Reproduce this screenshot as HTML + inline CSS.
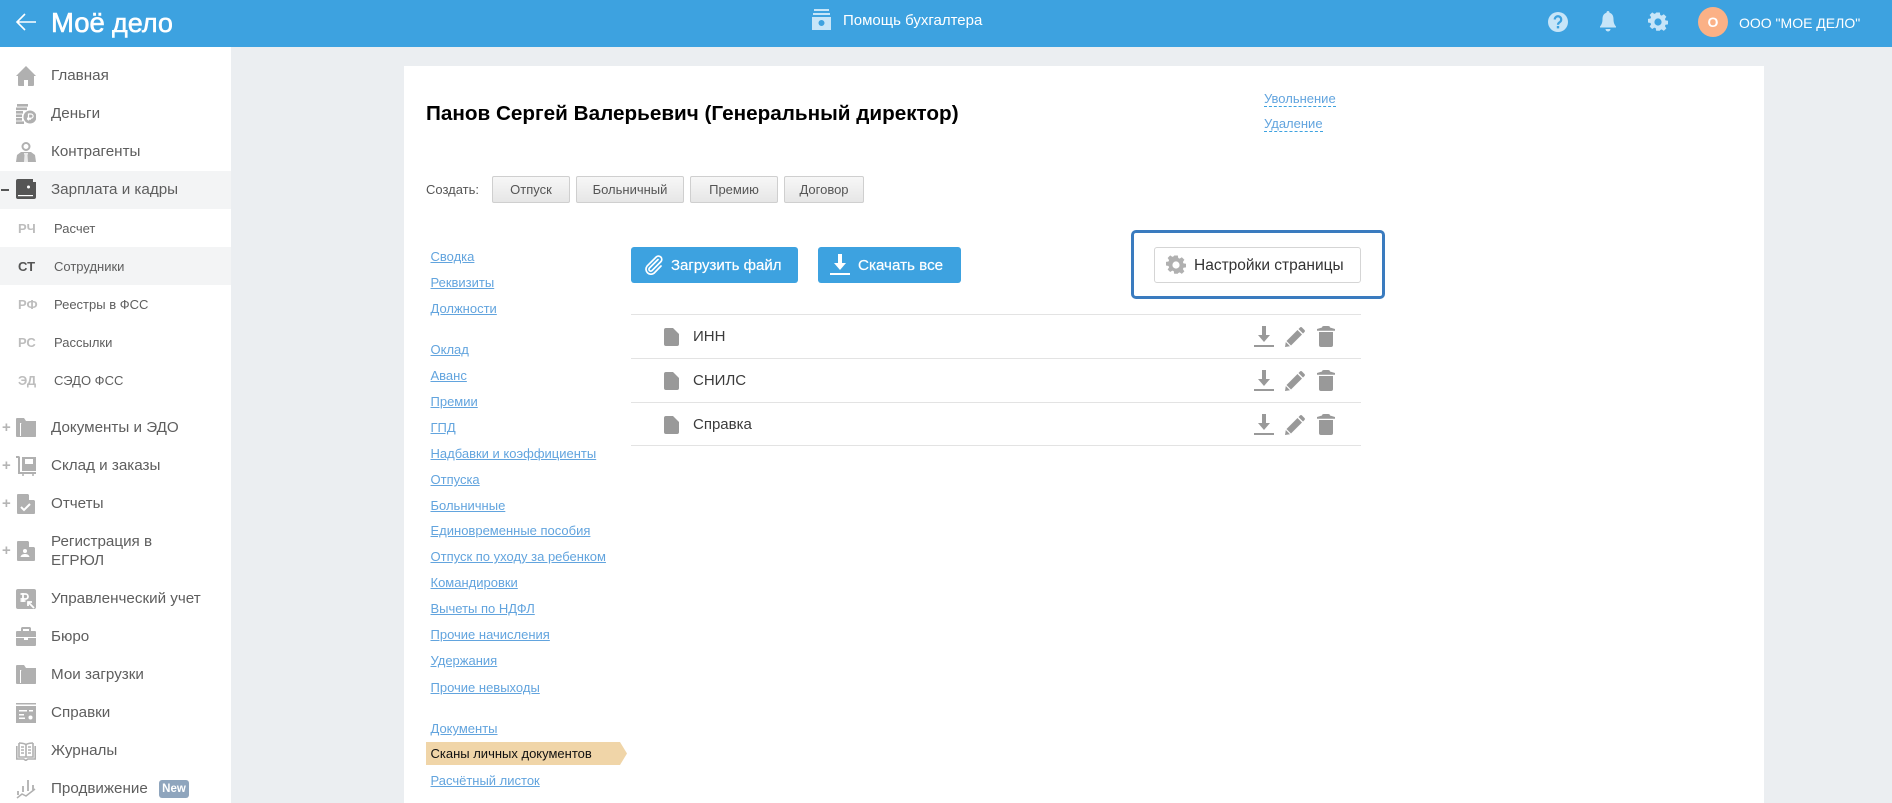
<!DOCTYPE html>
<html lang="ru"><head><meta charset="utf-8"><title>Моё дело</title>
<style>
*{box-sizing:border-box}
html,body{margin:0;padding:0}
body{width:1892px;height:803px;position:relative;overflow:hidden;background:#ebeef1;font-family:"Liberation Sans",sans-serif;color:#555}
.a{position:absolute;white-space:nowrap}
#top{position:absolute;left:0;top:0;width:1892px;height:47px;background:#3da2e0}
#side{position:absolute;left:0;top:47px;width:231px;height:756px;background:#fff}
#card{position:absolute;left:404px;top:66px;width:1360px;height:737px;background:#fff}
.bar{position:absolute;left:0;width:231px;background:#f3f4f5}
.m{position:absolute;left:51px;margin-top:1px;font-size:15.2px;line-height:20px;color:#5e5e5e;white-space:nowrap}
.s{position:absolute;left:54px;margin-top:1px;font-size:13px;line-height:16px;color:#5e5e5e;white-space:nowrap}
.k{position:absolute;left:18px;margin-top:1px;font-size:13px;line-height:16px;font-weight:bold;color:#bdbdbd;white-space:nowrap}
.p{position:absolute;left:2px;margin-top:1px;font-size:15px;line-height:16px;color:#b5b5b5;font-weight:bold}
svg{position:absolute;display:block}
.l{position:absolute;left:430.5px;margin-top:1px;font-size:13px;line-height:16px;color:#62a4de;text-decoration:underline;white-space:nowrap}
.b{position:absolute;top:176px;height:27px;border:1px solid #cfcfcf;border-radius:2px;background:linear-gradient(#f7f7f7,#e6e6e6);font-size:13px;line-height:25px;text-align:center;color:#555}
.d{position:absolute;left:1264px;margin-top:1px;height:16px;font-size:13px;line-height:15px;color:#62a4de;border-bottom:1px dashed #3da2e0;white-space:nowrap}
.blue{position:absolute;top:247px;height:36px;background:#3da2e0;border-radius:3px}
.bt{position:absolute;top:257px;font-size:15px;line-height:18px;color:#fff;white-space:nowrap;-webkit-text-stroke:.2px #fff}
.ln{position:absolute;left:631px;width:730px;height:1px;background:#e3e3e3}
.rt{position:absolute;left:693px;margin-top:1px;font-size:15px;line-height:18px;color:#3c3c3c}
</style></head><body>
<div id="top"></div><div id="side"></div><div id="card"></div>
<div class="bar" style="top:171px;height:38px"></div>
<div class="bar" style="top:247px;height:38px"></div>

<svg style="left:15px;top:12px" width="23" height="20" viewBox="0 0 23 20" fill="none" stroke="#fff" stroke-width="1.6"><path d="M21 10H2M10 2 2 10l8 8"/></svg>
<div class="a" style="left:51px;top:6px;font-size:27.5px;line-height:34px;color:#fff;-webkit-text-stroke:.6px #fff">Моё</div>
<div class="a" style="left:112px;top:7px;font-size:27px;line-height:32px;color:#fff;-webkit-text-stroke:.5px #fff">дело</div>

<svg style="left:812px;top:9px" width="19" height="21" viewBox="0 0 19 21" fill="#c7e5f8"><rect x="2" y="0" width="15" height="2"/><rect x="1" y="4" width="17" height="2"/><path d="M0 8h19v13H0zM9.500 11a3 3 0 1 0 0 6 3 3 0 0 0 0-6z" fill-rule="evenodd"/></svg>
<div class="a" style="left:843px;top:12px;font-size:15px;line-height:18px;color:#fff">Помощь бухгалтера</div>

<svg style="left:1548px;top:12px" width="20" height="20" viewBox="0 0 20 20"><circle cx="10" cy="10" r="10" fill="#c7e5f8"/><path d="M6.800 7.500a3.200 3.200 0 1 1 5 2.600c-1.200.8-1.800 1.300-1.800 2.600" fill="none" stroke="#3da2e0" stroke-width="2.200"/><rect x="8.800" y="14" width="2.400" height="2.400" fill="#3da2e0"/></svg>
<svg style="left:1600px;top:11px" width="16" height="21" viewBox="0 0 16 21" fill="#c7e5f8"><path d="M8 0a1.500 1.500 0 0 1 1.500 1.700C12.300 2.400 13.500 5 13.500 8c0 3.500.8 5.500 2.500 7.500v1H0v-1C1.700 13.500 2.500 11.500 2.500 8c0-3 1.200-5.600 4-6.300A1.500 1.500 0 0 1 8 0z"/><path d="M5.500 18h5a2.500 2.500 0 0 1-5 0z"/></svg>
<svg style="left:1648px;top:12px" width="20" height="20" viewBox="0 0 20 20"><path fill="#c7e5f8" fill-rule="evenodd" d="M8 0h4l.5 2.800 1.500.7 2.400-1.600 2.800 2.800-1.600 2.400.6 1.500 2.800.4v4l-2.800.5-.6 1.500 1.600 2.400-2.800 2.800-2.400-1.600-1.500.6L12 20H8l-.5-2.800-1.500-.6-2.400 1.600L.8 15.400l1.600-2.400-.6-1.500L-1 11V7l2.800-.4.6-1.500L.8 2.700 3.600-.1 6 1.500l1.500-.7z" transform="translate(.9 .5) scale(.91)"/><circle cx="10" cy="10" r="3.600" fill="#3da2e0"/></svg>
<div class="a" style="left:1698px;top:7px;width:30px;height:30px;border-radius:50%;background:#fbb186;color:#fff;font-weight:bold;font-size:14px;line-height:30px;text-align:center">О</div>
<div class="a" style="left:1739px;top:14px;font-size:14px;line-height:18px;color:#fff">ООО "МОЕ ДЕЛО"</div>

<!-- sidebar icons -->
<svg style="left:16px;top:66px" width="20" height="20" viewBox="0 0 20 20" fill="#b0b0b0"><path d="M10 0 20 10H18v9a1 1 0 0 1-1 1H12v-6H8v6H3a1 1 0 0 1-1-1V10H0z"/></svg>
<svg style="left:16px;top:104px" width="20" height="20" viewBox="0 0 20 20" fill="#b0b0b0"><rect x="1" y="0" width="11" height="2.600"/><rect y="3.500" width="11" height="2.600"/><rect y="7" width="7" height="2.600"/><rect y="10.500" width="6" height="2.600"/><rect y="14" width="6" height="2.600"/><rect y="17.400" width="8" height="2.600"/><circle cx="14" cy="13" r="6.500"/><path d="M12.500 9.500v7M12.500 10h2.500a2 2 0 0 1 0 4.200h-4M11 15.200h4" stroke="#fff" stroke-width="1.200" fill="none"/></svg>
<svg style="left:16px;top:142px" width="20" height="20" viewBox="0 0 20 20" fill="#b0b0b0"><path d="M10 0a4.500 4.500 0 0 1 4.500 4.500A4.500 4.500 0 0 1 5.500 4.500 4.500 4.500 0 0 1 10 0zm0 2a2.500 2.500 0 1 0 0 5 2.500 2.500 0 0 0 0-5z" fill-rule="evenodd"/><path d="M5 10h10l4 3 1 7H0l1-7z"/><path d="M8 11h4v1l-.5 1 .5 7H8l.5-7L8 12z" fill="#fff" opacity=".75"/></svg>
<svg style="left:16px;top:179px" width="20" height="20" viewBox="0 0 20 20"><path fill="#555" d="M2 0h15v3h3v15a2 2 0 0 1-2 2H2a2 2 0 0 1-2-2V2a2 2 0 0 1 2-2z"/><rect x="2" y="16" width="15" height="1.200" fill="#fff"/><circle cx="12.500" cy="8" r="1.500" fill="#fff"/></svg>
<svg style="left:16px;top:418px" width="20" height="19" viewBox="0 0 20 19" fill="#b0b0b0"><path fill-rule="evenodd" d="M1 0h7l2 3h10v15a1 1 0 0 1-1 1H1a1 1 0 0 1-1-1V1a1 1 0 0 1 1-1zm3 5v13h15V5z"/><rect x="5" y="5" width="15" height="14" rx="1"/></svg>
<svg style="left:16px;top:456px" width="20" height="20" viewBox="0 0 20 20" fill="#b0b0b0"><path d="M0 0h3l1 1v15h16v2H2V2H0z"/><path fill-rule="evenodd" d="M6 1h14v14H6zM9 3v5h8V3z"/><circle cx="7" cy="19" r="1"/><circle cx="17" cy="19" r="1"/></svg>
<svg style="left:17px;top:494px" width="18" height="20" viewBox="0 0 18 20"><path fill="#b0b0b0" d="M1 0h10l7 7v12a1 1 0 0 1-1 1H1a1 1 0 0 1-1-1V1a1 1 0 0 1 1-1z"/><path fill="#fff" d="M12 0l6 6h-6z"/><path d="M4 13l3 3 6-6" stroke="#fff" stroke-width="2" fill="none"/></svg>
<svg style="left:17px;top:541px" width="18" height="20" viewBox="0 0 18 20"><path fill="#b0b0b0" d="M1 0h10l7 7v12a1 1 0 0 1-1 1H1a1 1 0 0 1-1-1V1a1 1 0 0 1 1-1z"/><path fill="#fff" d="M12 0l6 6h-6z"/><circle cx="8" cy="10" r="2" fill="#fff"/><path fill="#fff" d="M3.500 16c.5-2 2-3 4.500-3s4 1 4.500 3z"/></svg>
<svg style="left:16px;top:589px" width="20" height="20" viewBox="0 0 20 20"><rect width="20" height="20" rx="2" fill="#b0b0b0"/><path d="M7 4v9M4.500 5h5a2.500 2.500 0 0 1 0 5H4.500M4.500 12h5" stroke="#fff" stroke-width="1.800" fill="none"/><path d="M18 19l-6-6M12 17v-4h4" stroke="#fff" stroke-width="1.800" fill="none"/></svg>
<svg style="left:16px;top:627px" width="20" height="19" viewBox="0 0 20 19" fill="#b0b0b0"><path fill-rule="evenodd" d="M6 0h8l1 1v3h4a1 1 0 0 1 1 1v5H0V5a1 1 0 0 1 1-1h4V1zm1 2v2h6V2z"/><path d="M0 11h8v2h4v-2h8v7a1 1 0 0 1-1 1H1a1 1 0 0 1-1-1z"/></svg>
<svg style="left:16px;top:665px" width="20" height="19" viewBox="0 0 20 19" fill="#b0b0b0"><path fill-rule="evenodd" d="M1 0h7l2 3h10v15a1 1 0 0 1-1 1H1a1 1 0 0 1-1-1V1a1 1 0 0 1 1-1zm3 5v13h15V5z"/><rect x="5" y="5" width="15" height="14" rx="1"/></svg>
<svg style="left:16px;top:703px" width="20" height="20" viewBox="0 0 20 20" fill="#b0b0b0"><rect width="20" height="1.500"/><path fill-rule="evenodd" d="M0 3h20v17H0zM3 7v1.500h8V7zm10 0v1.500h4V7zM3 11v1.500h5V11zm0 3.500V16h6v-1.500z"/><circle cx="14.500" cy="14.500" r="2" fill="#fff"/></svg>
<svg style="left:16px;top:741px" width="20" height="20" viewBox="0 0 20 20" fill="none" stroke="#b0b0b0" stroke-width="1.600"><path d="M3 2v14h7M10 3.500C8 2.500 6 2 3 2M17 2v14h-7M10 3.500C12 2.500 14 2 17 2M10 3v13M.8 5v13h7l2 1.500 2-1.500h7.400V5"/><path d="M5 6h3M5 9h3M5 12h3M12 6h3M12 9h3M12 12h3"/></svg>
<svg style="left:16px;top:779px" width="20" height="20" viewBox="0 0 20 20" fill="none" stroke="#b0b0b0" stroke-width="1.800"><path d="M2 12v4M7 7v6M12 1v11M17 6v5"/><path d="M1 19l5-4 4 2 9-7" stroke-width="1.500"/></svg>

<!-- sidebar text -->
<div class="m" style="top:65px">Главная</div>
<div class="m" style="top:103px">Деньги</div>
<div class="m" style="top:141px">Контрагенты</div>
<div class="a" style="left:1px;top:189px;width:8px;height:2px;background:#555"></div>
<div class="m" style="top:179px">Зарплата и кадры</div>
<div class="k" style="top:220px">РЧ</div><div class="s" style="top:220px">Расчет</div>
<div class="k" style="top:258px;color:#555">СТ</div><div class="s" style="top:258px">Сотрудники</div>
<div class="k" style="top:296px">РФ</div><div class="s" style="top:296px">Реестры в ФСС</div>
<div class="k" style="top:334px">РС</div><div class="s" style="top:334px">Рассылки</div>
<div class="k" style="top:372px">ЭД</div><div class="s" style="top:372px">СЭДО ФСС</div>
<div class="p" style="top:419px">+</div><div class="m" style="top:417px">Документы и ЭДО</div>
<div class="p" style="top:457px">+</div><div class="m" style="top:455px">Склад и заказы</div>
<div class="p" style="top:495px">+</div><div class="m" style="top:493px">Отчеты</div>
<div class="p" style="top:542px">+</div><div class="m" style="top:531px">Регистрация в</div><div class="m" style="top:550px">ЕГРЮЛ</div>
<div class="m" style="top:588px">Управленческий учет</div>
<div class="m" style="top:626px">Бюро</div>
<div class="m" style="top:664px">Мои загрузки</div>
<div class="m" style="top:702px">Справки</div>
<div class="m" style="top:740px">Журналы</div>
<div class="m" style="top:778px">Продвижение</div>
<div class="a" style="left:159px;top:780px;width:30px;height:18px;border-radius:3px;background:#8fa5bd;color:#fff;font-size:11.500px;font-weight:bold;line-height:18px;text-align:center">New</div>

<!-- title -->
<div class="a" style="left:426px;top:102px;font-size:20.7px;line-height:24px;font-weight:bold;color:#000">Панов Сергей Валерьевич (Генеральный директор)</div>
<div class="d" style="top:90px">Увольнение</div>
<div class="d" style="top:115px">Удаление</div>

<div class="a" style="left:426px;top:182px;font-size:13px;line-height:16px;color:#555">Создать:</div>
<div class="b" style="left:492px;width:78px">Отпуск</div>
<div class="b" style="left:576px;width:108px">Больничный</div>
<div class="b" style="left:690px;width:88px">Премию</div>
<div class="b" style="left:784px;width:80px">Договор</div>

<!-- left nav -->
<div class="l" style="top:248px">Сводка</div>
<div class="l" style="top:274px">Реквизиты</div>
<div class="l" style="top:300px">Должности</div>
<div class="l" style="top:341px">Оклад</div>
<div class="l" style="top:367px">Аванс</div>
<div class="l" style="top:393px">Премии</div>
<div class="l" style="top:419px">ГПД</div>
<div class="l" style="top:445px">Надбавки и коэффициенты</div>
<div class="l" style="top:471px">Отпуска</div>
<div class="l" style="top:497px">Больничные</div>
<div class="l" style="top:522px">Единовременные пособия</div>
<div class="l" style="top:548px">Отпуск по уходу за ребенком</div>
<div class="l" style="top:574px">Командировки</div>
<div class="l" style="top:600px">Вычеты по НДФЛ</div>
<div class="l" style="top:626px">Прочие начисления</div>
<div class="l" style="top:652px">Удержания</div>
<div class="l" style="top:679px">Прочие невыходы</div>
<div class="l" style="top:720px">Документы</div>
<svg style="left:426px;top:742px" width="201" height="23" viewBox="0 0 201 23"><path d="M0 0h194l7 11.500-7 11.500H0z" fill="#f0d5a8"/></svg>
<div class="a" style="left:430.5px;top:746px;font-size:13px;line-height:16px;color:#111">Сканы личных документов</div>
<div class="l" style="top:772px">Расчётный листок</div>

<!-- buttons -->
<div class="blue" style="left:631px;width:167px"></div>
<svg style="left:644px;top:255px" width="20" height="20" viewBox="0 0 20 20" fill="none" stroke="#fff" stroke-width="1.700" stroke-linecap="round"><path d="M14 4.500 5.500 13a1.800 1.800 0 0 0 2.500 2.600l9-9.100a3.300 3.300 0 0 0-4.700-4.600L3 11.200a5 5 0 0 0 7 7l7-7.200"/></svg>
<div class="bt" style="left:671px">Загрузить файл</div>
<div class="blue" style="left:818px;width:143px"></div>
<svg style="left:830px;top:254px" width="20" height="21" viewBox="0 0 20 21" fill="#fff"><path d="M8 0h4v9h4l-6 7-6-7h4z"/><rect y="19" width="20" height="2"/></svg>
<div class="bt" style="left:858px;font-size:15.2px">Скачать все</div>

<div class="a" style="left:1131px;top:230px;width:254px;height:69px;border:3px solid #3a7bbf;border-radius:5px"></div>
<div class="a" style="left:1154px;top:247px;width:207px;height:36px;border:1px solid #d5d5d5;border-radius:3px;background:#fff"></div>
<svg style="left:1166px;top:255px" width="20" height="20" viewBox="0 0 20 20"><path fill="#b0b0b0" fill-rule="evenodd" d="M8 0h4l.5 2.800 1.500.7 2.400-1.600 2.800 2.800-1.600 2.400.6 1.500 2.800.4v4l-2.800.5-.6 1.500 1.600 2.400-2.800 2.800-2.400-1.600-1.500.6L12 20H8l-.5-2.800-1.500-.6-2.400 1.600L.8 15.400l1.600-2.400-.6-1.500L-1 11V7l2.800-.4.6-1.500L.8 2.700 3.600-.1 6 1.500l1.500-.7z" transform="translate(.9 .5) scale(.91)"/><circle cx="10" cy="10" r="3.600" fill="#fff"/></svg>
<div class="a" style="left:1194px;top:257px;font-size:15.5px;line-height:18px;color:#333">Настройки страницы</div>

<!-- rows -->
<div class="ln" style="top:314px"></div>
<div class="ln" style="top:358px"></div>
<div class="ln" style="top:402px"></div>
<div class="ln" style="top:445px"></div>

<svg style="left:664px;top:328px" width="15" height="18" viewBox="0 0 15 18"><path fill="#999" d="M2 0h7l6 6v10a2 2 0 0 1-2 2H2a2 2 0 0 1-2-2V2a2 2 0 0 1 2-2z"/></svg>
<svg style="left:664px;top:372px" width="15" height="18" viewBox="0 0 15 18"><path fill="#999" d="M2 0h7l6 6v10a2 2 0 0 1-2 2H2a2 2 0 0 1-2-2V2a2 2 0 0 1 2-2z"/></svg>
<svg style="left:664px;top:416px" width="15" height="18" viewBox="0 0 15 18"><path fill="#999" d="M2 0h7l6 6v10a2 2 0 0 1-2 2H2a2 2 0 0 1-2-2V2a2 2 0 0 1 2-2z"/></svg>
<div class="rt" style="top:327px">ИНН</div>
<div class="rt" style="top:371px">СНИЛС</div>
<div class="rt" style="top:415px">Справка</div>

<svg style="left:1254px;top:326px" width="20" height="21" viewBox="0 0 20 21" fill="#999"><path d="M8 0h4v9h4l-6 7-6-7h4z"/><rect y="19" width="20" height="2"/></svg>
<svg style="left:1285px;top:327px" width="20" height="20" viewBox="0 0 20 20" fill="#999"><path d="M15 0.500a1.500 1.500 0 0 1 2 0l2.500 2.500a1.500 1.500 0 0 1 0 2L18 6.500 13.500 2zM12.500 3l4.500 4.500L6 18.500 1.500 14z"/><path d="M0.800 15 5 19.200 0 20z"/></svg>
<svg style="left:1317px;top:326px" width="18" height="21" viewBox="0 0 18 21" fill="#999"><path d="M5 1.500Q5 0 7 0h4q2 0 2 1.500L18 3v1.800H0V3z"/><path d="M2 6h14v13a2 2 0 0 1-2 2H4a2 2 0 0 1-2-2z"/></svg>

<svg style="left:1254px;top:370px" width="20" height="21" viewBox="0 0 20 21" fill="#999"><path d="M8 0h4v9h4l-6 7-6-7h4z"/><rect y="19" width="20" height="2"/></svg>
<svg style="left:1285px;top:371px" width="20" height="20" viewBox="0 0 20 20" fill="#999"><path d="M15 0.500a1.500 1.500 0 0 1 2 0l2.500 2.500a1.500 1.500 0 0 1 0 2L18 6.500 13.500 2zM12.500 3l4.500 4.500L6 18.500 1.500 14z"/><path d="M0.800 15 5 19.200 0 20z"/></svg>
<svg style="left:1317px;top:370px" width="18" height="21" viewBox="0 0 18 21" fill="#999"><path d="M5 1.500Q5 0 7 0h4q2 0 2 1.500L18 3v1.800H0V3z"/><path d="M2 6h14v13a2 2 0 0 1-2 2H4a2 2 0 0 1-2-2z"/></svg>

<svg style="left:1254px;top:414px" width="20" height="21" viewBox="0 0 20 21" fill="#999"><path d="M8 0h4v9h4l-6 7-6-7h4z"/><rect y="19" width="20" height="2"/></svg>
<svg style="left:1285px;top:415px" width="20" height="20" viewBox="0 0 20 20" fill="#999"><path d="M15 0.500a1.500 1.500 0 0 1 2 0l2.500 2.500a1.500 1.500 0 0 1 0 2L18 6.500 13.500 2zM12.500 3l4.500 4.500L6 18.500 1.500 14z"/><path d="M0.800 15 5 19.200 0 20z"/></svg>
<svg style="left:1317px;top:414px" width="18" height="21" viewBox="0 0 18 21" fill="#999"><path d="M5 1.500Q5 0 7 0h4q2 0 2 1.500L18 3v1.800H0V3z"/><path d="M2 6h14v13a2 2 0 0 1-2 2H4a2 2 0 0 1-2-2z"/></svg>
</body></html>
